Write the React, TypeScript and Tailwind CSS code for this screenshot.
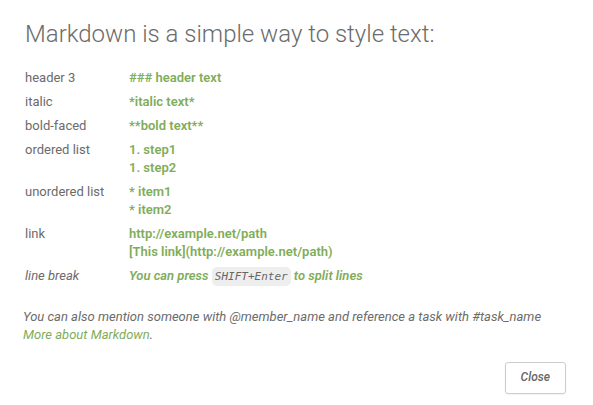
import React from "react";

type Row = { term: string; lines: string[] };

const rows: Row[] = [
  { term: "header 3", lines: ["### header text"] },
  { term: "italic", lines: ["*italic text*"] },
  { term: "bold-faced", lines: ["**bold text**"] },
  { term: "ordered list", lines: ["1. step1", "1. step2"] },
  { term: "unordered list", lines: ["* item1", "* item2"] },
  { term: "link", lines: ["http://example.net/path", "[This link](http://example.net/path)"] },
];

export default function App() {
  return (
    <main className="bg-white px-[23px] pt-4 pb-3 font-['Roboto',sans-serif] text-[13px] leading-[18px] text-[#6b6b6b]">
      <div className="pl-0.5">
        <h1 className="text-2xl leading-9 font-light">Markdown is a simple way to style text:</h1>
        <table className="mt-3.5 border-collapse text-left">
          <tbody>
            {rows.map((row) => (
              <tr key={row.term} className="align-top">
                <th scope="row" className="w-26 py-[3px] font-normal">{row.term}</th>
                <td className="py-[3px] font-semibold text-[#7fad59]">
                  {row.lines.map((line) => (
                    <div key={line}>{line}</div>
                  ))}
                </td>
              </tr>
            ))}
            <tr className="align-top italic">
              <th scope="row" className="w-26 py-[3px] font-normal">line break</th>
              <td className="py-[3px] font-semibold text-[#7fad59]">
                You can press{" "}
                <kbd className="rounded-[5px] bg-[#eee] px-[3px] py-[3px] font-['DejaVu_Sans_Mono',monospace] text-[11px] font-normal text-[#666]">SHIFT+Enter</kbd>
                {" "}to split lines
              </td>
            </tr>
          </tbody>
        </table>
      </div>
      <p className="mt-[19px] italic">
        You can also mention someone with @member_name and reference a task with #task_name
        <br />
        <a href="#markdown" className="text-[#7fad59]">More about Markdown</a>.
      </p>
      <div className="mt-[18px] flex justify-end pr-1">
        <button type="button" className="h-8 rounded-[3px] border border-[#ccc] px-[15px] pb-0.5 text-xs font-medium text-[#666] shadow-xs italic">Close</button>
      </div>
    </main>
  );
}
